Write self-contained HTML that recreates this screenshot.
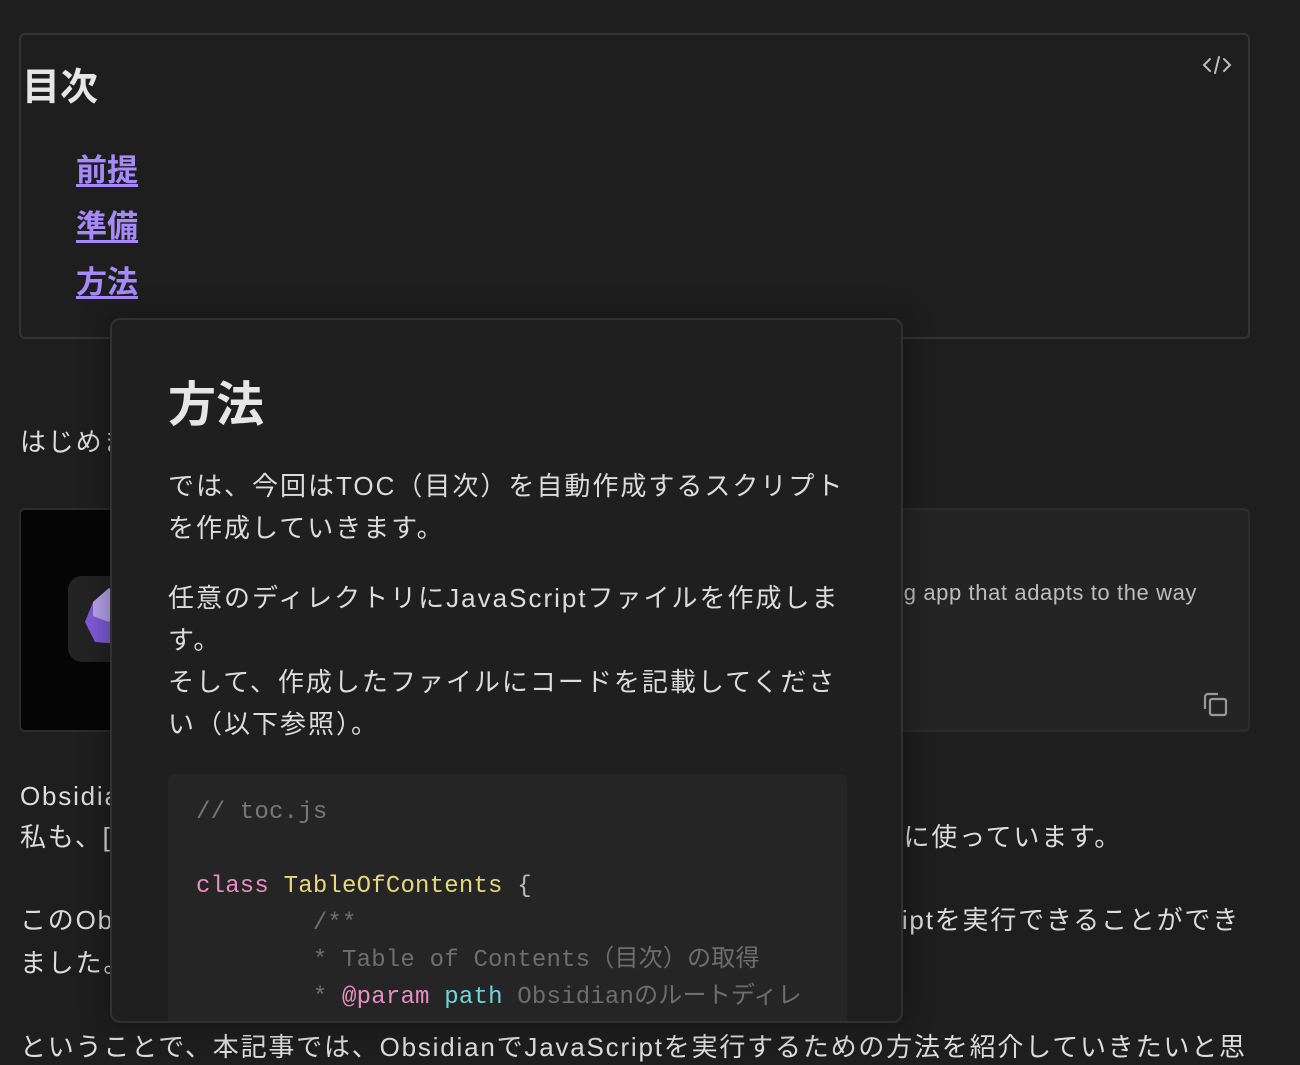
<!DOCTYPE html>
<html><head><meta charset="utf-8"><style>
*{margin:0;padding:0;box-sizing:border-box}
html,body{width:1300px;height:1060px;overflow:hidden;background:#1e1e1e;color:#dcdcdc;font-family:"Liberation Sans","Noto Sans CJK JP",sans-serif}
.a{position:absolute;white-space:nowrap}
.toc{position:absolute;left:19px;top:33px;width:1231px;height:306px;border:2px solid #343434;border-radius:6px}
.lnk{position:absolute;left:76px;font-size:31px;font-weight:bold;color:#a68af9;text-decoration:underline;text-underline-offset:3px;line-height:36px}
.t{font-size:26px;line-height:36px;color:#dcdcdc;letter-spacing:1.8px}
.card{position:absolute;left:19px;top:508px;width:1231px;height:224px;border:2px solid #2c2c2c;border-radius:6px;background:#242424;overflow:hidden}
.pop{position:absolute;left:110px;top:318px;width:793px;height:705px;background:#1f1f1f;border:2px solid #313131;border-radius:10px;box-shadow:0 0 30px rgba(0,0,0,.4);overflow:hidden}
.pt{position:absolute;left:56px;font-size:26px;line-height:42px;color:#dcdcdc;white-space:nowrap;letter-spacing:2px}
.code{position:absolute;left:56px;top:454px;width:679px;height:300px;background:#252525;border-radius:6px;font-family:"Liberation Mono","Noto Sans CJK JP",monospace;font-size:24px;color:#9a9a9a}
.code div{position:absolute;left:28px;white-space:pre;line-height:37px;letter-spacing:0.2px}
</style></head><body>
<div class="toc">
 <div class="a" style="left:1px;top:28px;font-size:38px;font-weight:bold;color:#e6e6e6;line-height:50px">目次</div>
 <svg class="a" style="left:1180px;top:19px" width="32" height="22" viewBox="0 0 32 22"><path d="M9 5 L3 11 L9 17 M23 5 L29 11 L23 17 M18 3 L14 19" stroke="#bdbdbd" stroke-width="2" fill="none" stroke-linecap="round"/></svg>
</div>
<div class="lnk" style="top:153px">前提</div>
<div class="lnk" style="top:209px">準備</div>
<div class="lnk" style="top:265px">方法</div>

<div class="a t" style="left:20px;top:424px">はじめまして</div>
<div class="card">
 <div style="position:absolute;left:0;top:0;width:230px;height:224px;background:#050505"></div>
 <div style="position:absolute;left:47px;top:66px;width:90px;height:86px;background:#232323;border-radius:14px"></div>
 <svg class="a" style="left:58px;top:72px" width="60" height="72" viewBox="0 0 60 72"><polygon points="30,6 46,18 40,62 16,60 6,40 14,20" fill="#7d5bd6"/><polygon points="30,6 46,18 30,40 14,34 14,20" fill="#b8a3ec"/></svg>
 <div class="a" style="right:51px;top:70px;font-size:22px;color:#bdbdbd;letter-spacing:0.6px">g app that adapts to the way</div>
 <svg class="a" style="left:1180px;top:180px" width="30" height="30" viewBox="0 0 30 30"><rect x="9" y="9" width="16" height="16" rx="2" stroke="#9a9a9a" stroke-width="2.2" fill="none"/><path d="M4 19 V7 a3 3 0 0 1 3 -3 H17" stroke="#9a9a9a" stroke-width="2.2" fill="none"/></svg>
</div>
<div class="a t" style="left:20px;top:778px">Obsidian</div>
<div class="a t" style="left:20px;top:819px">私も、[</div>
<div class="a t" style="right:178px;top:819px">どに使っています。</div>
<div class="a t" style="left:20px;top:902px">このObsidian</div>
<div class="a t" style="left:20px;top:945px">ました。</div>
<div class="a t" style="right:60px;top:902px">iptを実行できることができ</div>
<div class="a t" style="left:20px;top:1029px">ということで、本記事では、ObsidianでJavaScriptを実行するための方法を紹介していきたいと思</div>

<div class="pop">
 <div class="a" style="left:56px;top:56px;font-size:48px;font-weight:bold;color:#e6e6e6;line-height:60px">方法</div>
 <div class="pt" style="top:145px">では、今回はTOC（目次）を自動作成するスクリプト</div>
 <div class="pt" style="top:187px">を作成していきます。</div>
 <div class="pt" style="top:257px">任意のディレクトリにJavaScriptファイルを作成しま</div>
 <div class="pt" style="top:299px">す。</div>
 <div class="pt" style="top:341px">そして、作成したファイルにコードを記載してくださ</div>
 <div class="pt" style="top:383px">い（以下参照）。</div>
 <div class="code">
  <div style="top:20px;color:#777">// toc.js</div>
  <div style="top:94px"><span style="color:#e98fc0">class</span> <span style="color:#e6d97a">TableOfContents</span> <span style="color:#bbb">{</span></div>
  <div style="top:131px;color:#6e6e6e">        /**</div>
  <div style="top:168px;color:#6e6e6e">        * Table of Contents（目次）の取得</div>
  <div style="top:205px;color:#6e6e6e">        * <span style="color:#e98fc0">@param</span> <span style="color:#6fd6dc">path</span> Obsidianのルートディレ</div>
 </div>
</div>
</body></html>
